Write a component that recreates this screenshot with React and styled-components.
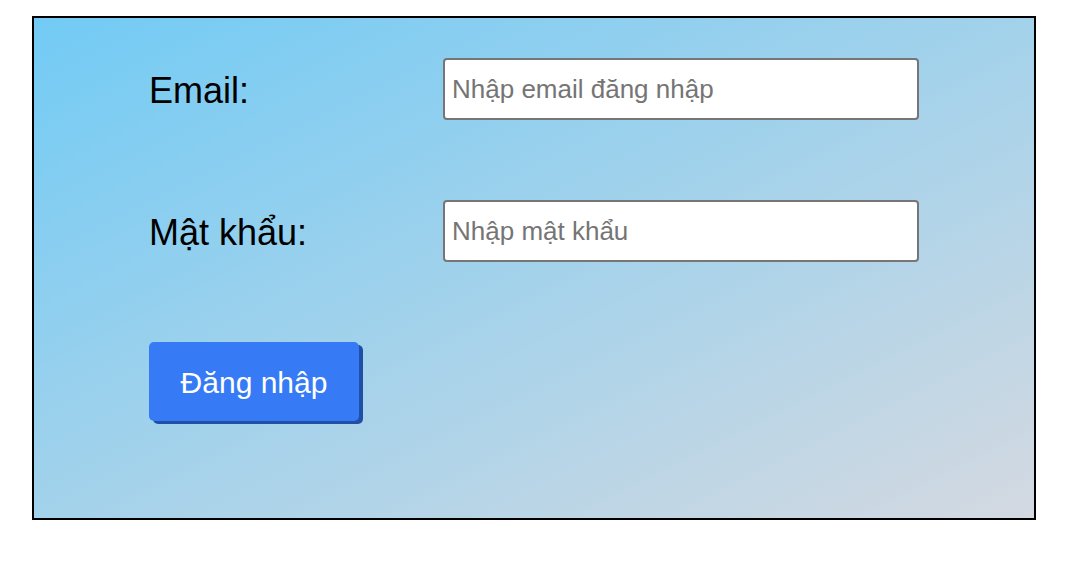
import styled, { createGlobalStyle } from "styled-components";

const GlobalStyle = createGlobalStyle`
  body {
    margin: 0;
    background: #ffffff;
    font-family: "Liberation Sans", Arial, sans-serif;
  }
`;

const Page = styled.div`
  padding: 16px 32px;
`;

const Card = styled.form`
  box-sizing: border-box;
  width: 1004px;
  height: 504px;
  border: 2px solid #000;
  background: linear-gradient(to bottom right, #72cbf5, #d4d9e1);
  padding: 40px 0 0 115px;
  display: flex;
  flex-direction: column;
  gap: 80px;
`;

const Row = styled.div`
  display: grid;
  grid-template-columns: 294px 476px;
  align-items: center;
  height: 62px;
`;

const Label = styled.label`
  font-size: 36px;
  color: #000;
  padding-top: 3px;
`;

const Input = styled.input`
  box-sizing: border-box;
  width: 476px;
  height: 62px;
  border: 2px solid #767676;
  border-radius: 4px;
  background: #fff;
  padding: 0 7px;
  font-family: "Liberation Sans", Arial, sans-serif;
  font-size: 26px;
  outline: none;

  &::placeholder {
    color: #757575;
  }
`;

const Button = styled.button`
  align-self: flex-start;
  box-sizing: border-box;
  width: 210px;
  height: 79px;
  border: none;
  border-radius: 5px;
  background: #367bf5;
  box-shadow: 4px 3px 0 #2050a6;
  color: #fff;
  font-family: "Liberation Sans", Arial, sans-serif;
  font-size: 30px;
  padding: 2px 0 0;
  cursor: pointer;
`;

export default function App() {
  return (
    <Page>
      <GlobalStyle />
      <Card onSubmit={(e) => e.preventDefault()}>
        <Row>
          <Label htmlFor="email">Email:</Label>
          <Input id="email" type="email" placeholder="Nhập email đăng nhập" />
        </Row>
        <Row>
          <Label htmlFor="password">Mật khẩu:</Label>
          <Input id="password" type="password" placeholder="Nhập mật khẩu" />
        </Row>
        <Button type="submit">Đăng nhập</Button>
      </Card>
    </Page>
  );
}
